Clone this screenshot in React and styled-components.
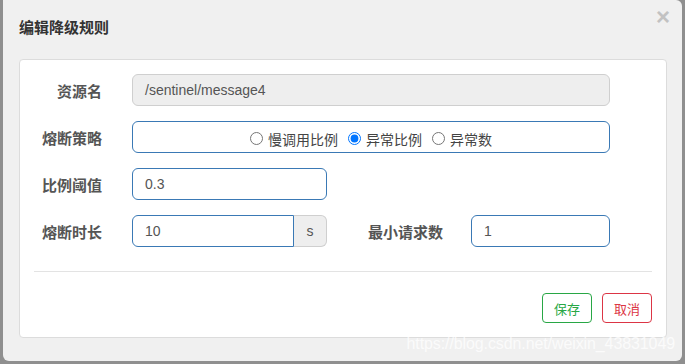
import React from "react";
import styled, { createGlobalStyle } from "styled-components";

const Global = createGlobalStyle`
  html, body {
    margin: 0;
    padding: 0;
    background: #8f8f8f;
    font-family: "Liberation Sans", "Noto Sans CJK SC", sans-serif;
  }
`;

const Page = styled.div`
  width: 685px;
  height: 364px;
  overflow: hidden;
  position: relative;
  padding-left: 3px;
  box-sizing: border-box;
`;

const Dialog = styled.div`
  width: 679px;
  height: 361px;
  background: #f0f0f0;
  border-radius: 0 6px 6px 6px;
  position: relative;
  display: flex;
  flex-direction: column;
`;

const Header = styled.div`
  height: 59px;
  display: flex;
  align-items: center;
  justify-content: space-between;
  padding: 0 12px 0 16px;
  box-sizing: border-box;
`;

const Title = styled.h4`
  margin: -6px 0 0;
  font-size: 15px;
  font-weight: bold;
  color: #333;
`;

const Close = styled.span`
  font-size: 24px;
  font-weight: bold;
  color: #c2c2c2;
  line-height: 1;
  align-self: flex-start;
  margin-top: 5px;
`;

const Panel = styled.div`
  margin-left: 16px;
  width: 648px;
  height: 279px;
  background: #fff;
  border: 1px solid #dcdcdc;
  border-radius: 4px;
  box-sizing: border-box;
  padding: 14px 14px 0;
`;

const Row = styled.div`
  display: flex;
  align-items: center;
  height: 32px;
  margin-bottom: 15px;
`;

const Label = styled.label`
  width: ${(p) => p.w}px;
  margin-right: ${(p) => p.gap}px;
  text-align: right;
  font-size: 15px;
  font-weight: bold;
  color: #555;
  flex-shrink: 0;
`;

const Input = styled.div`
  width: ${(p) => p.w}px;
  height: 32px;
  box-sizing: border-box;
  border: 1px solid ${(p) => (p.disabled ? "#cfcfcf" : "#3a79b5")};
  background: ${(p) => (p.disabled ? "#eeeeee" : "#fff")};
  border-radius: ${(p) => (p.addon ? "6px 0 0 6px" : "6px")};
  padding: 0 12px;
  display: flex;
  align-items: center;
  font-size: 14px;
  color: #555;
  flex-shrink: 0;
`;

const RadioBox = styled(Input)`
  justify-content: center;
  gap: 10px;
  padding-top: 3px;
`;

const Radio = styled.label`
  display: flex;
  align-items: center;
  gap: 5px;
  font-size: 14px;
  color: #444;
  font-family: "Noto Sans CJK SC", sans-serif;

  input {
    margin: 0;
    width: 13px;
    height: 13px;
    accent-color: #0075ff;
  }
`;

const Addon = styled.div`
  width: 33px;
  height: 32px;
  box-sizing: border-box;
  border: 1px solid #cfcfcf;
  border-left: none;
  border-radius: 0 6px 6px 0;
  background: #eeeeee;
  display: flex;
  align-items: center;
  justify-content: center;
  font-size: 14px;
  color: #555;
`;

const Divider = styled.hr`
  margin: 24px 0 0;
  border: none;
  border-top: 1px solid #e3e3e3;
`;

const Footer = styled.div`
  display: flex;
  justify-content: flex-end;
  gap: 10px;
  margin-top: 21px;
`;

const Button = styled.button`
  width: 50px;
  height: 30px;
  background: #fff;
  border: 1px solid ${(p) => p.color};
  color: ${(p) => p.color};
  border-radius: 4px;
  font-size: 13px;
  font-family: "Noto Sans CJK SC", sans-serif;
  padding: 0;
`;

const Watermark = styled.div`
  position: absolute;
  right: 10px;
  bottom: 11px;
  font-size: 16px;
  color: rgba(255, 255, 255, 0.75);
  letter-spacing: -0.1px;
`;

export default function App() {
  return (
    <Page>
      <Global />
      <Dialog>
        <Header>
          <Title>编辑降级规则</Title>
          <Close>×</Close>
        </Header>
        <Panel>
          <Row>
            <Label w={68} gap={30}>资源名</Label>
            <Input w={478} disabled>/sentinel/message4</Input>
          </Row>
          <Row>
            <Label w={68} gap={30}>熔断策略</Label>
            <RadioBox w={478}>
              <Radio><input type="radio" name="g" readOnly />慢调用比例</Radio>
              <Radio><input type="radio" name="g" defaultChecked />异常比例</Radio>
              <Radio><input type="radio" name="g" readOnly />异常数</Radio>
            </RadioBox>
          </Row>
          <Row>
            <Label w={68} gap={30}>比例阈值</Label>
            <Input w={195}>0.3</Input>
          </Row>
          <Row>
            <Label w={68} gap={30}>熔断时长</Label>
            <Input w={162} addon>10</Input>
            <Addon>s</Addon>
            <Label w={116} gap={28}>最小请求数</Label>
            <Input w={139}>1</Input>
          </Row>
          <Divider />
          <Footer>
            <Button color="#28a745">保存</Button>
            <Button color="#dc3545">取消</Button>
          </Footer>
        </Panel>
      </Dialog>
      <Watermark>https://blog.csdn.net/weixin_43831049</Watermark>
    </Page>
  );
}
